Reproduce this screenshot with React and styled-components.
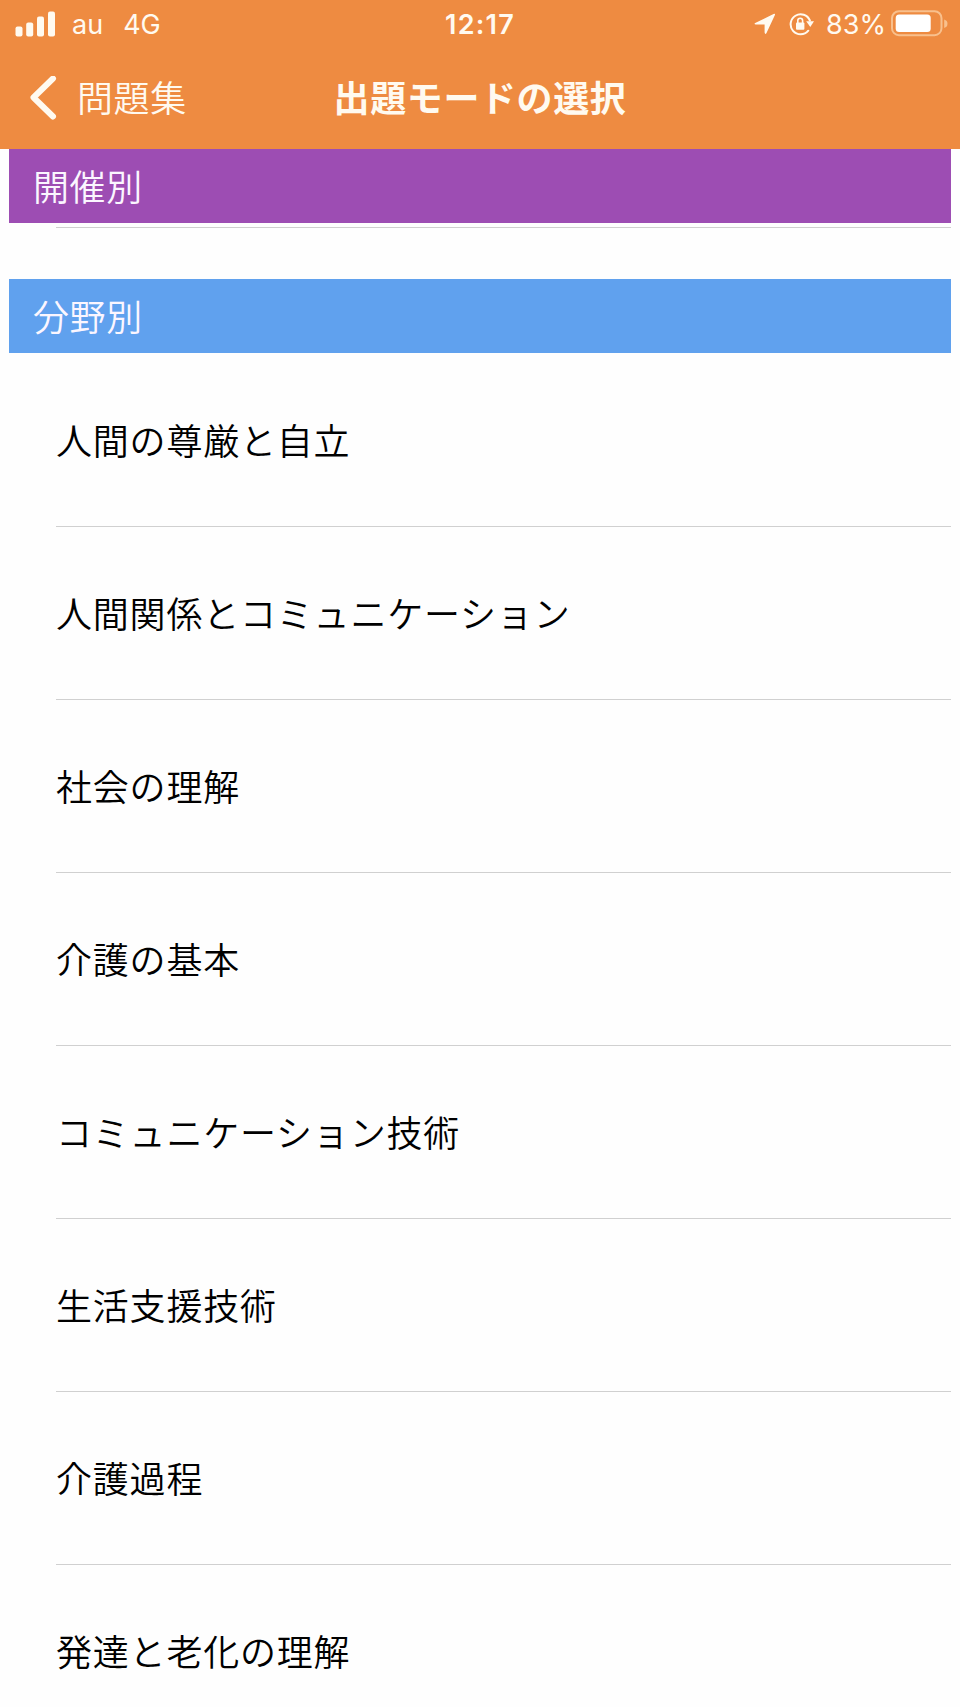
import React from "react";
import styled, { createGlobalStyle } from "styled-components";

const GlobalStyle = createGlobalStyle`
  * {
    box-sizing: border-box;
  }

  body {
    margin: 0;
    background-color: #fefefe;
    font-family: Inter, "Noto Sans CJK JP", sans-serif;
  }
`;

const Container = styled.div`
  width: 960px;
  height: 1707px;
  overflow: hidden;
  background-color: #fefefe;
`;

const Header = styled.header`
  height: 149px;
  background-color: #ee8b41;
  color: #fffaf0;
`;

const StatusBar = styled.div`
  height: 48px;
  padding: 0 12px 0 15px;
  display: grid;
  grid-template-columns: 1fr auto 1fr;
  align-items: center;
`;

const StatusGroup = styled.div`
  display: flex;
  align-items: center;
  justify-content: ${(props) => (props.$end ? "flex-end" : "flex-start")};
`;

const StatusText = styled.span`
  height: 48px;
  padding-top: 1px;
  font-size: 27px;
  line-height: 48px;
  font-weight: ${(props) => (props.$bold ? 600 : 400)};
  letter-spacing: ${(props) => props.$spacing || "0"};
  margin-left: ${(props) => props.$left || "0"};
`;

const Time = styled(StatusText)`
  margin-right: 3px;
`;

const StatusIcon = styled.svg`
  display: block;
  flex: none;
  margin-left: ${(props) => props.$left || "0"};
`;

const NavBar = styled.nav`
  height: 100px;
  padding: 0 29px;
  display: grid;
  grid-template-columns: 1fr auto 1fr;
  align-items: center;
`;

const BackButton = styled.button`
  display: flex;
  align-items: center;
  padding: 0;
  border: none;
  background: none;
  color: inherit;
  font-family: "Noto Sans CJK JP", sans-serif;
  font-size: 36px;
  font-weight: 350;
  line-height: 52px;
  letter-spacing: 0.6px;
  cursor: pointer;
`;

const BackLabel = styled.span`
  margin-left: 20px;
  padding-bottom: 4px;
`;

const Title = styled.h1`
  margin: 0;
  padding-bottom: 4px;
  font-family: "Noto Sans CJK JP", sans-serif;
  font-size: 36px;
  font-weight: 700;
  line-height: 52px;
  letter-spacing: 0.6px;
`;

const List = styled.main`
  margin: 0 9.4px;
`;

const SectionHeader = styled.h2`
  height: 74px;
  margin: 0;
  padding-left: 23.6px;
  background-color: ${(props) => props.$color};
  color: #fbf6ff;
  font-family: "Noto Sans CJK JP", sans-serif;
  font-size: 36px;
  font-weight: 350;
  line-height: 72px;
  letter-spacing: 0.6px;
`;

const SectionEnd = styled.div`
  height: 5px;
  margin: 0 0 51px 46.6px;
  border-bottom: 1px solid #cfcfcf;
`;

const Row = styled.div`
  height: 173.05px;
  margin-left: 46.6px;
  padding-bottom: 2px;
  display: flex;
  align-items: center;
  color: #000;
  font-family: "Noto Sans CJK JP", sans-serif;
  font-size: 36px;
  font-weight: 350;
  line-height: 52px;
  letter-spacing: 0.8px;

  & + & {
    border-top: 1px solid #d0d0d0;
  }
`;

const categories = [
  "人間の尊厳と自立",
  "人間関係とコミュニケーション",
  "社会の理解",
  "介護の基本",
  "コミュニケーション技術",
  "生活支援技術",
  "介護過程",
  "発達と老化の理解",
];

const Signal = () => (
  <StatusIcon width="42" height="26" viewBox="0 0 42 26" fill="currentColor">
    <rect x="0.5" y="15.5" width="7" height="10" rx="2" />
    <rect x="11.2" y="11.5" width="7" height="14" rx="2" />
    <rect x="22" y="5.5" width="7" height="20" rx="2" />
    <rect x="33" y="0.5" width="7" height="25" rx="2" />
  </StatusIcon>
);

const Location = () => (
  <StatusIcon width="22" height="22" viewBox="0 0 22 22" fill="currentColor">
    <path d="M1.2 10 19.5 1Q21.6 0 20.8 2.3L12.5 20Q11.2 22 10.6 19.5V11.5H2Q-.6 11.2 1.2 10Z" />
  </StatusIcon>
);

const RotationLock = () => (
  <StatusIcon $left="13px" width="25" height="24" viewBox="0 0 25 24" fill="none">
    <path
      d="M20.9 8.5A10 10 0 1 0 19.3 18.7"
      stroke="currentColor"
      strokeWidth="2"
      strokeLinecap="round"
    />
    <path d="M17.2 9.3H25L21.3 15Z" fill="currentColor" />
    <rect x="7" y="10.4" width="8.4" height="7.4" rx="1" fill="currentColor" />
    <path d="M8.8 11V8.6a2.4 2.4 0 0 1 4.8 0V11" stroke="currentColor" strokeWidth="1.6" />
  </StatusIcon>
);

const Battery = () => (
  <StatusIcon $left="5px" width="57" height="28" viewBox="0 0 57 28" fill="none">
    <rect x="1" y="1.2" width="49.5" height="24" rx="7" stroke="#f8c08d" strokeWidth="2" />
    <rect x="4.7" y="4.6" width="35" height="17.4" rx="3.5" fill="#fff" />
    <path d="M53.2 9.5Q56.5 10.5 56.5 13.8T53.2 18Z" fill="#f8c08d" />
  </StatusIcon>
);

const App = () => {
  return (
    <Container>
      <GlobalStyle />
      <Header>
        <StatusBar>
          <StatusGroup>
            <Signal />
            <StatusText $left="15px">au</StatusText>
            <StatusText $left="20px">4G</StatusText>
          </StatusGroup>
          <Time $bold $spacing="1.2px">12:17</Time>
          <StatusGroup $end>
            <Location />
            <RotationLock />
            <StatusText $left="12px">83%</StatusText>
            <Battery />
          </StatusGroup>
        </StatusBar>
        <NavBar>
          <BackButton>
            <svg width="28" height="44" viewBox="0 0 28 44" fill="none">
              <path
                d="M24 2.5 4.5 21.5 24 40.5"
                stroke="currentColor"
                strokeWidth="6"
                strokeLinecap="round"
                strokeLinejoin="round"
              />
            </svg>
            <BackLabel>問題集</BackLabel>
          </BackButton>
          <Title>出題モードの選択</Title>
        </NavBar>
      </Header>
      <List>
        <SectionHeader $color="#9d4db3">開催別</SectionHeader>
        <SectionEnd />
        <SectionHeader $color="#60a1ee">分野別</SectionHeader>
        {categories.map((item) => (
          <Row key={item}>{item}</Row>
        ))}
      </List>
    </Container>
  );
};

export default App;
